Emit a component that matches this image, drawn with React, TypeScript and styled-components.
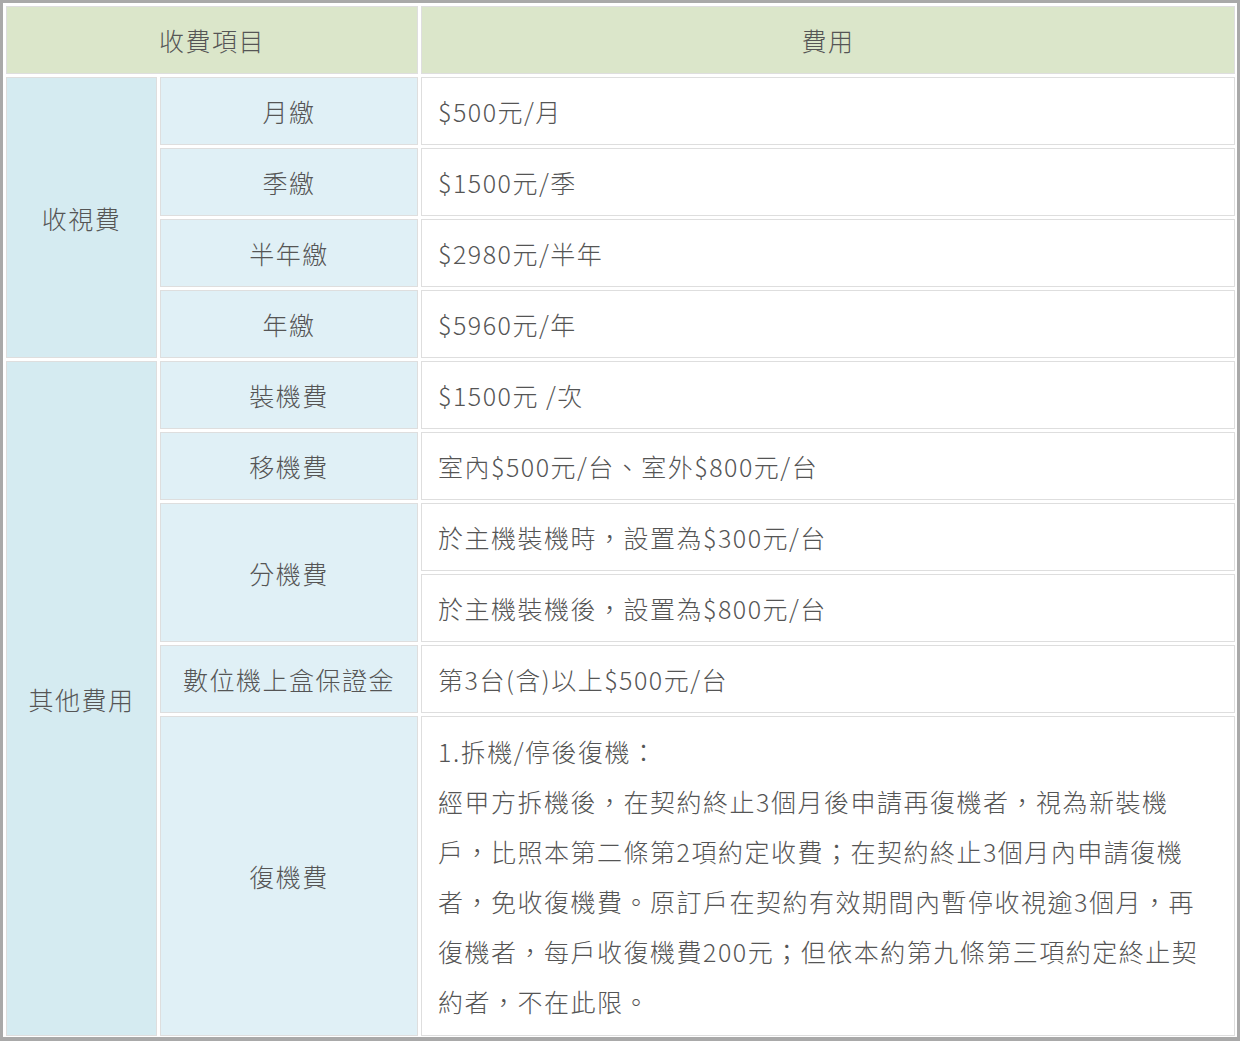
import React from "react";
import styled, { createGlobalStyle } from "styled-components";

const Global = createGlobalStyle`
  html, body { margin: 0; padding: 0; background: #ffffff; }
  body { overflow: hidden; }
  * { box-sizing: border-box; }
`;

const Frame = styled.div`
  width: 1240px;
  height: 1041px;
  border: 3px solid #a9a9a9;
  border-bottom-width: 4px;
  background: #ffffff;
  padding: 3px 2px 1px 3px;
  font-family: "Microsoft JhengHei", "Noto Sans CJK TC", "Noto Sans", sans-serif;
  font-size: 25px;
  font-weight: 300;
  color: #555555;
`;

const Grid = styled.div`
  display: grid;
  height: 100%;
  grid-template-columns: 151px 258px 1fr;
  grid-template-rows: repeat(10, 68px) 1fr;
  gap: 3px;
`;

type Tone = "head" | "group" | "item" | "value";

const bg: Record<Tone, string> = {
  head: "#dbe6ca",
  group: "#d5ebf1",
  item: "#e0f0f6",
  value: "#ffffff",
};

const Cell = styled.div<{ $tone: Tone; $col?: string; $row?: string }>`
  background: ${(p) => bg[p.$tone]};
  border: 1px solid #dedede;
  display: flex;
  align-items: center;
  justify-content: ${(p) => (p.$tone === "value" ? "flex-start" : "center")};
  padding: ${(p) => (p.$tone === "value" ? "0 14px 0 16px" : "0 6px")};
  grid-column: ${(p) => p.$col ?? "auto"};
  grid-row: ${(p) => p.$row ?? "auto"};
  white-space: nowrap;
  letter-spacing: 1.5px;
`;

const Para = styled.div`
  line-height: 50px;
`;

const longLines = [
  "1.拆機/停後復機：",
  "經甲方拆機後，在契約終止3個月後申請再復機者，視為新裝機",
  "戶，比照本第二條第2項約定收費；在契約終止3個月內申請復機",
  "者，免收復機費。原訂戶在契約有效期間內暫停收視逾3個月，再",
  "復機者，每戶收復機費200元；但依本約第九條第三項約定終止契",
  "約者，不在此限。",
];

export default function App() {
  return (
    <>
      <Global />
      <Frame>
        <Grid>
          <Cell $tone="head" $col="1 / 3">收費項目</Cell>
          <Cell $tone="head">費用</Cell>

          <Cell $tone="group" $row="2 / 6">收視費</Cell>
          <Cell $tone="item">月繳</Cell>
          <Cell $tone="value">$500元/月</Cell>
          <Cell $tone="item">季繳</Cell>
          <Cell $tone="value">$1500元/季</Cell>
          <Cell $tone="item">半年繳</Cell>
          <Cell $tone="value">$2980元/半年</Cell>
          <Cell $tone="item">年繳</Cell>
          <Cell $tone="value">$5960元/年</Cell>

          <Cell $tone="group" $row="6 / 12">其他費用</Cell>
          <Cell $tone="item">裝機費</Cell>
          <Cell $tone="value">$1500元 /次</Cell>
          <Cell $tone="item">移機費</Cell>
          <Cell $tone="value">室內$500元/台、室外$800元/台</Cell>
          <Cell $tone="item" $row="8 / 10">分機費</Cell>
          <Cell $tone="value">於主機裝機時，設置為$300元/台</Cell>
          <Cell $tone="value">於主機裝機後，設置為$800元/台</Cell>
          <Cell $tone="item">數位機上盒保證金</Cell>
          <Cell $tone="value">第3台(含)以上$500元/台</Cell>
          <Cell $tone="item">復機費</Cell>
          <Cell $tone="value">
            <Para>
              {longLines.map((l, i) => (
                <React.Fragment key={i}>
                  {l}
                  {i < longLines.length - 1 && <br />}
                </React.Fragment>
              ))}
            </Para>
          </Cell>
        </Grid>
      </Frame>
    </>
  );
}
